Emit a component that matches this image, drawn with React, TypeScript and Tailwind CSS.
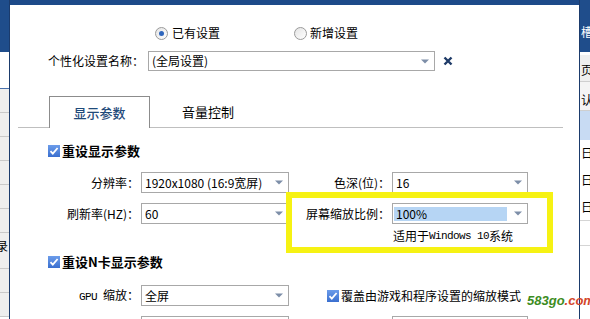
import type { ReactNode } from 'react'

const cjk = "font-['Noto_Sans_CJK_SC','Liberation_Sans',sans-serif]"
const mono = "font-['Liberation_Mono','Noto_Sans_CJK_SC',monospace]"

function Arrow() {
  return (
    <svg width="8" height="5" viewBox="0 0 8 5" className="shrink-0">
      <path d="M0 0.5h8L4 4.5z" fill="#7d8ea8" />
    </svg>
  )
}

function Select({ className, children, highlight }: { className: string; children?: ReactNode; highlight?: boolean }) {
  return (
    <div className={`flex h-full shrink-0 items-center border border-[#a8a8a8] bg-white pr-[5px] ${className}`}>
      {highlight ? (
        <div className="ml-px mr-[7px] flex h-[14px] flex-1 items-center bg-[#b6d5f4] pl-[2px]">{children}</div>
      ) : (
        <div className="flex-1 whitespace-nowrap pl-[3px]">{children}</div>
      )}
      <Arrow />
    </div>
  )
}

function Check() {
  return (
    <div className="flex h-[12px] w-[12px] shrink-0 items-center justify-center bg-gradient-to-b from-[#6c9cea] to-[#3a6fcf]">
      <svg width="10" height="10" viewBox="0 0 10 10">
        <path d="M1.5 5.2l2.3 2.4L8.6 2" stroke="#fff" strokeWidth="1.8" fill="none" />
      </svg>
    </div>
  )
}

function Radio({ on }: { on?: boolean }) {
  return (
    <div className="flex h-[13px] w-[13px] shrink-0 items-center justify-center rounded-full border border-[#9a9a9a] bg-gradient-to-br from-[#e4e4e4] to-white">
      {on && <div className="h-[5px] w-[5px] rounded-full bg-[#2f66bd]" />}
    </div>
  )
}

function Label({ className, children }: { className: string; children: ReactNode }) {
  return <div className={`shrink-0 whitespace-nowrap text-right ${className}`}>{children}</div>
}

export default function App() {
  // row heights of the window behind the dialog (left edge)
  const leftRows = [24, 24, 24, 24, 24, 24, 36, 24, 24]
  return (
    <div className={`relative flex h-[319px] w-[590px] overflow-hidden bg-white text-[12px] text-black ${cjk}`}>
      {/* background window, left edge */}
      <div className="flex w-[9px] shrink-0 flex-col overflow-hidden">
        <div className="h-[52px] shrink-0 bg-[#1f4d8b]" />
        <div className="h-[37px] shrink-0 border-b border-[#4a72ad] bg-white" />
        {leftRows.map((h, i) => (
          <div
            key={i}
            className={`relative shrink-0 overflow-hidden border-b border-[#c9c9c9] bg-[#eeeeee] ${h === 36 ? 'h-[36px]' : 'h-[24px]'}`}
          >
            {h === 36 && <span className="absolute left-[-4px] top-[7px] leading-none">录</span>}
          </div>
        ))}
      </div>

      {/* dialog */}
      <div className="relative w-[570px] shrink-0 border-l border-[#1b3b6c] bg-white">
        <div className="h-[5px] bg-[#1d4a89]" />

        {/* mode radios */}
        <div className="mt-[18px] flex h-[20px] items-center pl-[145px]">
          <Radio on />
          <span className="ml-[4px]">已有设置</span>
          <div className="ml-[74px]">
            <Radio />
          </div>
          <span className="ml-[3px]">新增设置</span>
        </div>

        {/* name */}
        <div className="mt-[8px] flex h-[20px] items-center pl-[38px]">
          <span className="w-[98px] shrink-0 whitespace-nowrap">个性化设置名称：</span>
          <Select className="ml-[2px] w-[287px]">(全局设置)</Select>
          <svg width="10" height="10" viewBox="0 0 10 10" className="ml-[8px]">
            <path d="M1.5 1.5l7 7M8.5 1.5l-7 7" stroke="#1f3b68" strokeWidth="2.4" />
          </svg>
        </div>

        {/* tabs */}
        <div className="mt-[25px] ml-[8px] flex h-[32px] w-[545px] items-end border-b border-[#bfbfbf] pl-[31px]">
          <div className="relative z-10 -mb-px flex h-[32px] w-[101px] items-center justify-center border border-b-0 border-[#8c8c8c] bg-white text-[13px] font-medium text-[#1f4a7a]">
            显示参数
          </div>
          <div className="flex h-[31px] w-[116px] items-center justify-center text-[13px]">音量控制</div>
        </div>

        <div className="pl-[38px]">
          {/* reset display */}
          <div className="mt-[15px] flex h-[16px] items-center">
            <Check />
            <span className="ml-[2px] text-[13px] font-bold">重设显示参数</span>
          </div>

          <div className="mt-[13px] flex h-[21px] items-center">
            <Label className="w-[91px]">分辨率：</Label>
            <Select className="ml-[2px] w-[148px]">1920x1080 (16:9宽屏)</Select>
            <Label className="w-[101px]">色深(位)：</Label>
            <Select className="ml-[2px] w-[136px]">16</Select>
          </div>

          <div className="mt-[10px] flex h-[21px] items-center">
            <Label className="w-[91px]">刷新率(HZ)：</Label>
            <Select className="ml-[2px] w-[148px]">60</Select>
            <Label className="w-[101px]">屏幕缩放比例：</Label>
            <Select className="ml-[2px] w-[136px]" highlight>
              <span>100%</span>
            </Select>
          </div>

          <div className="mt-[5px] flex h-[14px] items-center whitespace-nowrap pl-[345px]">
            适用于<span className={`${mono} text-[11px] tracking-[-0.6px]`}>Windows 10</span>系统
          </div>

          {/* reset nvidia */}
          <div className="mt-[11px] flex h-[16px] items-center">
            <Check />
            <span className="ml-[2px] text-[13px] font-bold">重设N卡显示参数</span>
          </div>

          <div className="mt-[15px] flex h-[21px] items-center">
            <Label className="w-[91px]">
              <span className={`${mono} text-[11px] tracking-[-0.6px]`}>GPU </span>缩放：
            </Label>
            <Select className="ml-[2px] w-[148px]">全屏</Select>
            <div className="ml-[38px] flex w-[194px] shrink-0 items-center overflow-hidden whitespace-nowrap">
              <Check />
              <span className="ml-[2px]">覆盖由游戏和程序设置的缩放模式</span>
            </div>
          </div>

          <div className="mt-[10px] flex h-[21px] items-center pl-[93px]">
            <Select className="w-[148px]" />
            <Select className="ml-[103px] w-[136px]" />
          </div>
        </div>

        {/* annotation highlight */}
        <div className="pointer-events-none absolute left-[276px] top-[192px] h-[61px] w-[267px] border-[6px] border-[#f6f213]" />
      </div>

      {/* background window, right edge */}
      <div className="flex w-[11px] shrink-0 flex-col overflow-hidden border-l border-[#1b3b6c]">
        <div className="relative h-[52px] shrink-0 bg-[#1f4d8b]">
          <span className="absolute left-[1px] top-[26px] leading-none text-white">槽</span>
        </div>
        <div className="mt-[3px] h-[27px] shrink-0 border-b border-[#cfcfcf] bg-[#efefef] pl-[1px] pt-[9px] leading-none">页</div>
        <div className="h-[29px] shrink-0 border-b border-[#cfcfcf] bg-[#f4f4f4] pl-[1px] pt-[12px] leading-none">认</div>
        <div className="h-[29px] shrink-0 bg-[#c8dbf3]" />
        <div className="h-[27px] shrink-0 pl-[1px] pt-[7px] leading-none">日</div>
        <div className="h-[27px] shrink-0 pl-[1px] pt-[7px] leading-none">日</div>
        <div className="h-[27px] shrink-0 border-b border-[#d5d5d5] pl-[1px] pt-[7px] leading-none">日</div>
        <div className="h-[25px] shrink-0 border-b border-[#d5d5d5]" />
      </div>

      {/* watermark */}
      <div className="pointer-events-none absolute left-[527px] top-[294px] font-['Liberation_Sans',sans-serif] text-[13px] font-bold italic leading-none">
        <span className="text-[#3c8c1e]">583go</span>
        <span className="text-[#d4472b]">.com</span>
      </div>
    </div>
  )
}
